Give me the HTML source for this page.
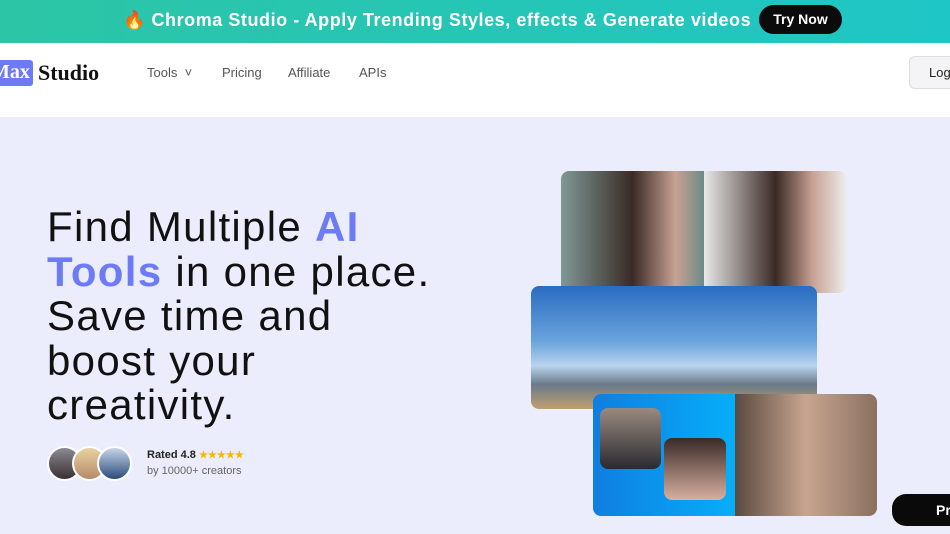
<!DOCTYPE html>
<html><head><style>
*{margin:0;padding:0;box-sizing:border-box}
body{width:950px;height:534px;overflow:hidden;background:#ebedfd;font-family:"Liberation Sans",sans-serif;position:relative}
.top{position:absolute;left:0;top:0;width:950px;height:43px;background:linear-gradient(90deg,#2cc5a5,#1fc6c6);color:#fff;font-weight:bold;font-size:18px}
.top .t{position:absolute;left:123px;top:10px;letter-spacing:0.55px;white-space:nowrap}
.top .b{position:absolute;left:759px;top:5px;width:83px;height:29px;background:#0b0b0b;border-radius:15px;font-size:14px;text-align:center;line-height:29px}
.nav{position:absolute;top:43px;left:0;width:950px;height:74px;background:#fff}
.logo{position:absolute;left:-12px;top:17px;width:45px;background:#6d79f5;color:#fff;font:bold 20px "Liberation Serif",serif;padding:1px 0 0 3px;border-radius:3px;height:26px;overflow:hidden}
.logo2{position:absolute;left:38px;top:17px;font:bold 22px "Liberation Serif",serif;color:#111}
.nav a{position:absolute;top:22px;font-size:13px;color:#555}
.login{position:absolute;left:909px;top:13px;width:60px;height:33px;border:1px solid #ddd;border-radius:6px;background:#f4f4f6;font-size:13px;line-height:31px;padding-left:19px;color:#222}
h1{position:absolute;left:47px;top:205px;font-size:42px;line-height:44.5px;font-weight:normal;color:#111;letter-spacing:1.3px;white-space:nowrap}
h1 span{color:#6d7cf6;font-weight:bold}
.av{position:absolute;top:446px;width:35px;height:35px;border-radius:50%;border:2px solid #fff}
.img{position:absolute;border-radius:8px;overflow:hidden}
.pr{position:absolute;left:892px;top:494px;width:80px;height:32px;background:#0a0a0a;border-radius:14px;color:#fff;font-size:14px;font-weight:bold;padding:8px 0 0 44px}
</style></head><body>
<div class="top"><div class="t">🔥 Chroma Studio - Apply Trending Styles, effects &amp; Generate videos</div><div class="b">Try Now</div></div>
<div class="nav">
<div class="logo">Max</div><div class="logo2">Studio</div>
<a style="left:147px">Tools &nbsp;˅</a><a style="left:222px">Pricing</a><a style="left:288px">Affiliate</a><a style="left:359px">APIs</a>
<div class="login">Login</div>
</div>
<h1>Find Multiple <span>AI<br>Tools</span> in one place.<br>Save time and<br>boost your<br>creativity.</h1>
<div class="av" style="left:47px;background:linear-gradient(#8a8a90,#3a3033)"></div>
<div class="av" style="left:72px;background:linear-gradient(#e8d3a0,#b58a6a)"></div>
<div class="av" style="left:97px;background:linear-gradient(#c8d6e8,#2b4a7a)"></div>
<div style="position:absolute;left:147px;top:449px;font-size:11px;font-weight:bold;color:#222">Rated 4.8 <span style="color:#f5b800;font-size:10px">★★★★★</span></div>
<div style="position:absolute;left:147px;top:465px;font-size:11px;color:#666">by 10000+ creators</div>
<div class="img" style="left:561px;top:171px;width:286px;height:122px;background:linear-gradient(90deg,#7f9996 0%,#3a2a25 25%,#c8a293 40%,#6d8a88 50%,#e8e8e8 50%,#3a2a25 75%,#c8a293 88%,#eee 100%)"></div>
<div class="img" style="left:531px;top:286px;width:286px;height:123px;background:linear-gradient(180deg,#2a6cc2 0%,#6aa4dc 45%,#b8d4ec 65%,#6a7a8a 80%,#c0a070 100%)"></div>
<div class="img" style="left:593px;top:394px;width:284px;height:122px;background:linear-gradient(90deg,#0f7ee0 0%,#07aefa 50%,#5a4a40 50%,#c8a590 75%,#8a7060 100%)">
<div style="position:absolute;left:7px;top:14px;width:61px;height:61px;border-radius:8px;background:linear-gradient(#9a8a80,#2a2a30)"></div>
<div style="position:absolute;left:71px;top:44px;width:62px;height:62px;border-radius:8px;background:linear-gradient(#3a2a28,#d8b0a0)"></div>
</div>
<div class="pr">Pr</div>
</body></html>
